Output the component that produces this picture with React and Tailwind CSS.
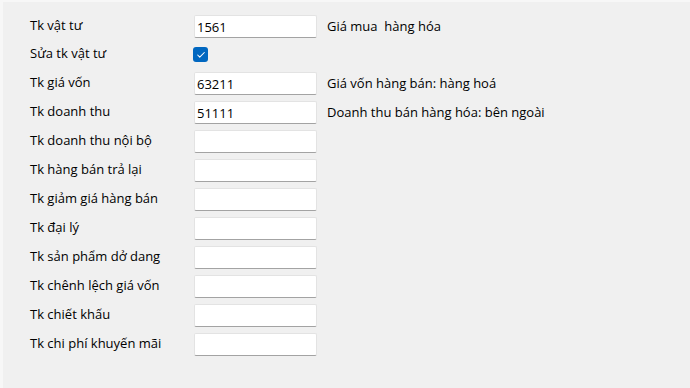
import { Check } from 'lucide-react'

// Các dòng tài khoản bên dưới ô "Sửa tk vật tư"
const rows = [
  { label: 'Tk giá vốn', value: '63211', note: 'Giá vốn hàng bán: hàng hoá' },
  { label: 'Tk doanh thu', value: '51111', note: 'Doanh thu bán hàng hóa: bên ngoài' },
  { label: 'Tk doanh thu nội bộ', value: '' },
  { label: 'Tk hàng bán trả lại', value: '' },
  { label: 'Tk giảm giá hàng bán', value: '' },
  { label: 'Tk đại lý', value: '' },
  { label: 'Tk sản phẩm dở dang', value: '' },
  { label: 'Tk chênh lệch giá vốn', value: '' },
  { label: 'Tk chiết khấu', value: '' },
  { label: 'Tk chi phí khuyến mãi', value: '' },
]

function TextBox({ value }) {
  return (
    <input
      readOnly
      value={value}
      className="w-[123px] h-[23px] px-[2px] bg-white border border-[#e3e3e3] border-b-[#a3a3a3] rounded-[2px] text-[13px] text-black outline-none"
    />
  )
}

function Row({ label, value, note }) {
  return (
    <div className="flex items-start h-[29px]">
      <span className="w-[164px] leading-[16px] pt-[2px]">{label}</span>
      <TextBox value={value} />
      {note && <span className="ml-[10px] leading-[16px] pt-[3px] whitespace-pre">{note}</span>}
    </div>
  )
}

export default function App() {
  return (
    <div className="w-[690px] h-[388px] bg-[#f0f0f0] border-t-[2px] border-l-[3px] border-[#f7f7f7] text-[13px] text-black font-['Open_Sans',sans-serif]">
      <div className="pl-[27px] pt-[13px] flex flex-col">
        <Row label="Tk vật tư" value="1561" note="Giá mua  hàng hóa" />

        {/* Ô đánh dấu cho phép sửa tài khoản vật tư */}
        <div className="flex items-start h-[28px]">
          <span className="w-[163px] leading-[16px] pt-[1px]">Sửa tk vật tư</span>
          <span className="mt-[3px] w-[15px] h-[15px] rounded-[3px] bg-[#0067c0] flex items-center justify-center">
            <Check size={10} strokeWidth={2.5} className="text-white" />
          </span>
        </div>

        {rows.map(r => (
          <Row key={r.label} {...r} />
        ))}
      </div>
    </div>
  )
}
